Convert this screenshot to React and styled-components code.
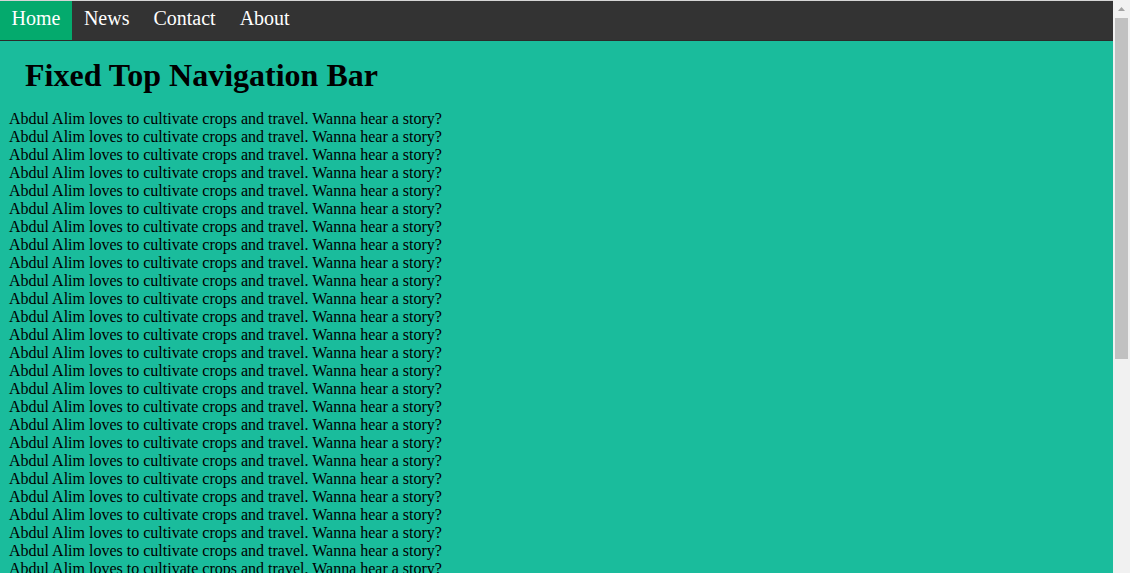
import React from 'react';
import styled, { createGlobalStyle } from 'styled-components';

const GlobalStyle = createGlobalStyle`
    html, body {
        margin: 0;
        height: 100%;
        overflow: hidden;
        background: #1abc9c;
        font-family: "Liberation Serif", "Times New Roman", serif;
        color: #000;
    }
`;

const Window = styled.div`
    display: flex;
    height: 100vh;
`;

const Page = styled.div`
    flex: 1;
    min-width: 0;
    overflow: hidden;
    background: #1abc9c;
`;

const ScrollRail = styled.div`
    width: 17px;
    flex: none;
    display: flex;
    flex-direction: column;
    background: #f1f1f1;
`;

const ArrowButton = styled.div`
    height: 17px;
    display: flex;
    align-items: center;
    justify-content: center;
`;

const Thumb = styled.div`
    margin: 1px 2px 0;
    height: 341px;
    background: #c1c1c1;
`;

const NavBar = styled.nav`
    display: flex;
    height: 39px;
    background: #333;
    border-top: 1px solid #d6d6d6;
    border-bottom: 1px solid #2b2b2b;
`;

const NavLink = styled.a`
    display: block;
    padding: 6px ${props => (props.active ? '11.5px' : '12px')} 0;
    line-height: 23px;
    font-size: 20px;
    color: #fff;
    text-decoration: none;
    background: ${props => (props.active ? '#04aa6d' : 'transparent')};
`;

const Main = styled.main`
    padding: 0 9px 3px;
`;

const Title = styled.h1`
    margin: 16px 0 16px;
    padding: 0 16px;
    font-size: 32px;
    line-height: 37px;
    font-weight: bold;
`;

const Line = styled.div`
    font-size: 16px;
    line-height: 18px;
    white-space: nowrap;
`;

const links = ['Home', 'News', 'Contact', 'About'];
const lines = Array.from({ length: 44 }, (_, i) => i);

const App = () => {
    return (
        <>
            <GlobalStyle />
            <Window>
                <Page>
                    <NavBar>
                        {links.map((name, i) => (
                            <NavLink key={name} href="#" active={i === 0 ? 1 : 0}>{name}</NavLink>
                        ))}
                    </NavBar>
                    <Main>
                        <Title>Fixed Top Navigation Bar</Title>
                        {lines.map(i => (
                            <Line key={i}>Abdul Alim loves to cultivate crops and travel. Wanna hear a story?</Line>
                        ))}
                    </Main>
                </Page>
                <ScrollRail>
                    <ArrowButton>
                        <svg width="7" height="4" viewBox="0 0 7 4">
                            <path d="M3.5 0 L7 4 L0 4 Z" fill="#a3a3a3" />
                        </svg>
                    </ArrowButton>
                    <Thumb />
                </ScrollRail>
            </Window>
        </>
    );
}

export default App;
